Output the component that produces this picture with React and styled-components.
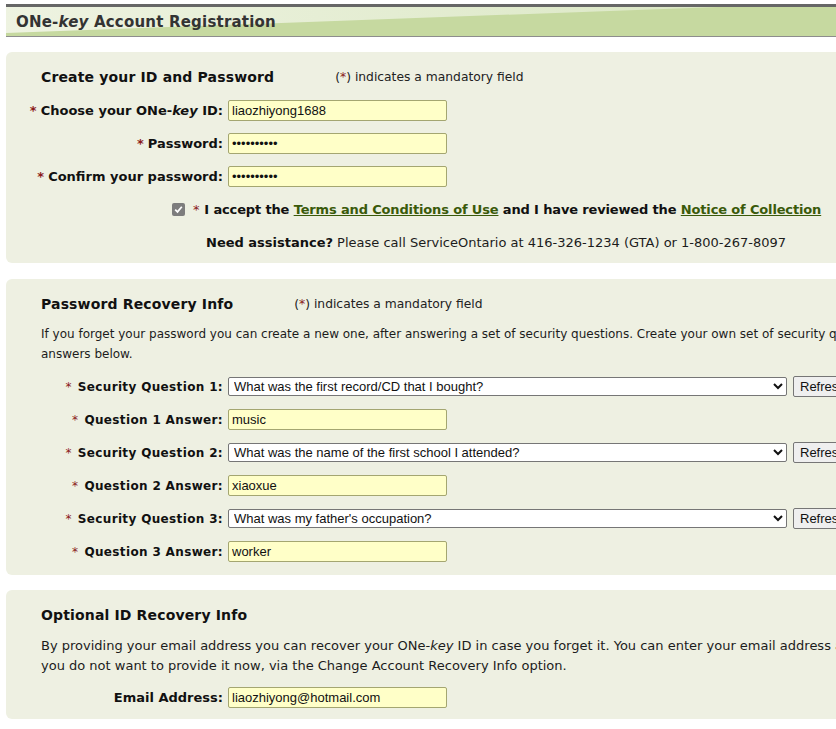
import React from "react";
import styled, { createGlobalStyle } from "styled-components";

const Global = createGlobalStyle`
  html, body { margin: 0; padding: 0; background: #fff; overflow: hidden; }
  body { font-family: "DejaVu Sans", Verdana, sans-serif; color: #1c1c1c; }
`;

const Page = styled.div`
  width: 1000px;
  padding: 4px 0 20px 6px;
`;

const Header = styled.div`
  border-top: 3px solid #666;
  border-bottom: 1px solid #8d8d8d;
  height: 29px;
  background: #c6d9a0;
  position: relative;
  display: flex;
  align-items: center;
  padding-left: 10px;
  overflow: hidden;
  &::before {
    content: "";
    position: absolute;
    inset: 0;
    background: linear-gradient(to right, #eef3e1, #dce8c6 70%, #d3e2b6);
    clip-path: polygon(0 0, 712px 0, 0 26px);
  }
`;

const Title = styled.h1`
  position: relative;
  margin: 0;
  font-size: 15px;
  font-weight: bold;
  color: #333;
  letter-spacing: 0.2px;
  em { font-style: italic; }
`;

const Panel = styled.section`
  margin-top: ${(p) => p.$top}px;
  background: #eef0e2;
  border-radius: 6px;
  padding: ${(p) => p.$pt}px 0 ${(p) => p.$bottom}px 0;
`;

const HeadRow = styled.div`
  height: 34px;
  display: flex;
  align-items: center;
  padding-left: 35px;
`;

const Heading = styled.h2`
  margin: 0;
  font-size: 14px;
  font-weight: bold;
  color: #111;
  letter-spacing: 0.15px;
`;

const Note = styled.span`
  margin-left: 61px;
  font-size: 12.3px;
  color: #222;
`;

const Red = styled.span`
  color: #8b1a1a;
`;

const Para = styled.p`
  margin: ${(p) => p.$mt}px 0 ${(p) => p.$mb}px 0;
  padding-left: 35px;
  font-size: ${(p) => p.$size}px;
  line-height: ${(p) => p.$lh}px;
  color: #1c1c1c;
  white-space: nowrap;
  em { font-style: italic; }
`;

const Row = styled.div`
  height: 33px;
  display: flex;
  align-items: center;
  gap: 5px;
`;

const Label = styled.label`
  width: 217px;
  flex: none;
  text-align: right;
  font-size: ${(p) => (p.$small ? 12 : 13)}px;
  letter-spacing: ${(p) => (p.$small ? 0.35 : 0)}px;
  font-weight: bold;
  color: #111;
  white-space: nowrap;
  em { font-style: italic; }
`;

const Star = styled.span`
  color: #8b1a1a;
  font-weight: ${(p) => (p.$light ? "normal" : "bold")};
  margin-right: ${(p) => (p.$light ? 6 : 4)}px;
`;

const TextInput = styled.input`
  box-sizing: border-box;
  width: 219px;
  height: 21px;
  margin: 0;
  padding: 0 3px;
  border: 1px solid #a4a671;
  border-radius: 2px;
  background: #ffffc8;
  font-family: "Liberation Sans", Arial, sans-serif;
  font-size: 13px;
  color: #111;
  outline: none;
`;

const Select = styled.select`
  box-sizing: border-box;
  width: 559px;
  height: 19px;
  margin: 0;
  padding: 0 1px;
  border: 1px solid #767676;
  border-radius: 2px;
  background: #fff;
  font-family: "Liberation Sans", Arial, sans-serif;
  font-size: 13px;
  color: #111;
`;

const Button = styled.button`
  box-sizing: border-box;
  margin-left: 1px;
  height: 21px;
  padding: 0 6px;
  border: 1px solid #767676;
  border-radius: 2px;
  background: #efefef;
  font-family: "Liberation Sans", Arial, sans-serif;
  font-size: 13px;
  color: #111;
`;

const AcceptRow = styled.div`
  height: 33px;
  display: flex;
  align-items: center;
  padding-left: 166px;
  font-size: 13px;
  font-weight: bold;
  color: #111;
  white-space: nowrap;
  letter-spacing: -0.15px;
`;

const CheckBox = styled.span`
  width: 13px;
  height: 13px;
  flex: none;
  box-sizing: border-box;
  border-radius: 2px;
  background: #7d7d7d;
  display: flex;
  align-items: center;
  justify-content: center;
  margin-right: 8px;
`;

const SmallStar = styled.span`
  color: #8b1a1a;
  font-weight: normal;
  margin-right: 5px;
`;

const Link = styled.a`
  color: #3a5a0a;
  text-decoration: underline;
`;

const HelpRow = styled.div`
  height: 32px;
  display: flex;
  align-items: center;
  padding-left: 200px;
  font-size: 13px;
  color: #1c1c1c;
  white-space: nowrap;
  b { color: #111; margin-right: 4px; }
`;

const questions = [
  { q: "Security Question 1:", v: "What was the first record/CD that I bought?", a: "Question 1 Answer:", av: "music" },
  { q: "Security Question 2:", v: "What was the name of the first school I attended?", a: "Question 2 Answer:", av: "xiaoxue" },
  { q: "Security Question 3:", v: "What was my father's occupation?", a: "Question 3 Answer:", av: "worker" },
];

export default function App() {
  return (
    <Page>
      <Global />
      <Header>
        <Title>
          ONe-<em>key</em> Account Registration
        </Title>
      </Header>

      <Panel $top={15} $pt={8} $bottom={5}>
        <HeadRow>
          <Heading>Create your ID and Password</Heading>
          <Note>
            (<Red>*</Red>) indicates a mandatory field
          </Note>
        </HeadRow>
        <Row>
          <Label>
            <Star>*</Star>Choose your ONe-<em>key</em> ID:
          </Label>
          <TextInput defaultValue="liaozhiyong1688" />
        </Row>
        <Row>
          <Label>
            <Star>*</Star>Password:
          </Label>
          <TextInput type="password" defaultValue="abcdefghij" />
        </Row>
        <Row>
          <Label>
            <Star>*</Star>Confirm your password:
          </Label>
          <TextInput type="password" defaultValue="abcdefghij" />
        </Row>
        <AcceptRow>
          <CheckBox role="checkbox" aria-checked="true">
            <svg width="9" height="9" viewBox="0 0 9 9">
              <path d="M1.2 4.6 L3.5 6.9 L7.8 1.8" fill="none" stroke="#fff" strokeWidth="1.7" />
            </svg>
          </CheckBox>
          <SmallStar>*</SmallStar>I accept the&nbsp;<Link href="#">Terms and Conditions of Use</Link>&nbsp;and I have
          reviewed the&nbsp;<Link href="#">Notice of Collection</Link>
        </AcceptRow>
        <HelpRow>
          <b>Need assistance?</b> Please call ServiceOntario at 416-326-1234 (GTA) or 1-800-267-8097
        </HelpRow>
      </Panel>

      <Panel $top={16} $pt={8} $bottom={7}>
        <HeadRow>
          <Heading>Password Recovery Info</Heading>
          <Note>
            (<Red>*</Red>) indicates a mandatory field
          </Note>
        </HeadRow>
        <Para $mt={3} $mb={6} $lh={20} $size={12}>
          If you forget your password you can create a new one, after answering a set of security questions. Create
          your own set of security questions and
          <br />
          answers below.
        </Para>
        {questions.map((item) => (
          <React.Fragment key={item.q}>
            <Row>
              <Label $small>
                <Star $light>*</Star>
                {item.q}
              </Label>
              <Select defaultValue={item.v}>
                <option>{item.v}</option>
              </Select>
              <Button type="button">Refresh</Button>
            </Row>
            <Row>
              <Label $small>
                <Star $light>*</Star>
                {item.a}
              </Label>
              <TextInput defaultValue={item.av} />
            </Row>
          </React.Fragment>
        ))}
      </Panel>

      <Panel $top={15} $pt={8} $bottom={5}>
        <HeadRow>
          <Heading>Optional ID Recovery Info</Heading>
        </HeadRow>
        <Para $mt={4} $mb={5} $lh={20} $size={13}>
          By providing your email address you can recover your ONe-<em>key</em> ID in case you forget it. You can enter
          your email address at a later time if
          <br />
          you do not want to provide it now, via the Change Account Recovery Info option.
        </Para>
        <Row>
          <Label>Email Address:</Label>
          <TextInput defaultValue="liaozhiyong@hotmail.com" />
        </Row>
      </Panel>
    </Page>
  );
}
